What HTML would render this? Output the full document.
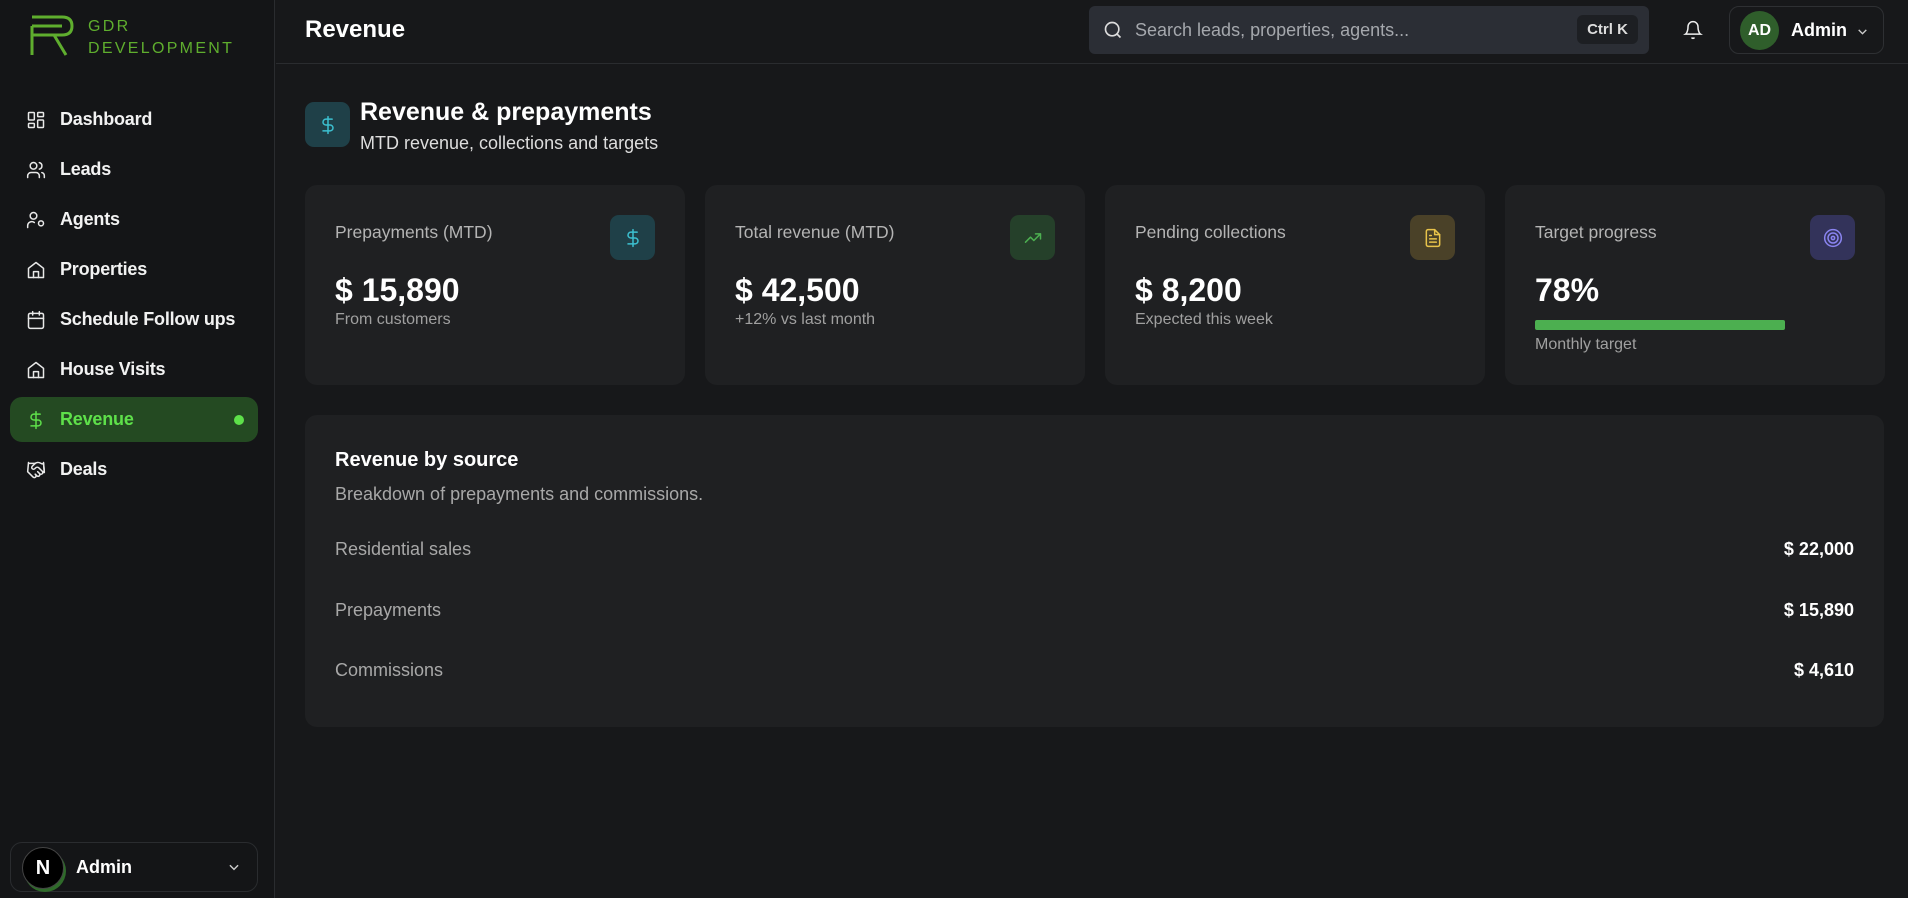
<!DOCTYPE html>
<html><head><meta charset="utf-8"><style>
*{box-sizing:border-box;margin:0;padding:0}
body{width:1908px;height:898px;background:#17181a;font-family:"Liberation Sans",sans-serif;color:#fff;position:relative;overflow:hidden}
.side{position:absolute;left:0;top:0;width:275px;height:898px;background:#141517;border-right:1px solid #2a2c2f}
.nav{position:absolute;left:10px;width:248px;height:45px;border-radius:12px;display:flex;align-items:center;font-size:18px;font-weight:bold;color:#f2f2f2;letter-spacing:-0.2px}
.nav svg{position:absolute;left:16px;width:20px;height:20px;fill:none;stroke:#e8e8e8;stroke-width:1.8;stroke-linecap:round;stroke-linejoin:round}
.nav span{position:absolute;left:50px}
.hdr{position:absolute;left:276px;top:0;right:0;height:64px;border-bottom:1px solid #2a2c2f}
.card{position:absolute;top:185px;width:380px;height:200px;background:#1f2022;border-radius:12px}
.ib{position:absolute;top:30px;right:30px;width:45px;height:45px;border-radius:9px;display:flex;align-items:center;justify-content:center}
.ib svg{width:20px;height:20px;fill:none;stroke-width:1.8;stroke-linecap:round;stroke-linejoin:round}
.val{position:absolute;left:30px;top:87px;font-size:32px;font-weight:bold}
.sub{position:absolute;left:30px;top:126px;font-size:16px;color:#a0a0a0}
.t{position:absolute;left:30px;top:37px;font-size:17.5px;color:#b4b4b4}
.row{position:absolute;left:30px;right:30px;display:flex;justify-content:space-between;font-size:18px}
.row span:first-child{color:#a8a8a8}
.row span:last-child{font-weight:bold}
</style></head><body>
<div class="side">
  <svg style="position:absolute;left:30px;top:15px" width="48" height="42" viewBox="0 0 48 42" fill="none" stroke="#5fae2e" stroke-width="3">
    <path d="M2 2H32Q42 2 42 11Q42 20 32 20H2"/><path d="M2 11V40"/><path d="M2 11H32"/><path d="M24 20L36 40"/>
  </svg>
  <div style="position:absolute;left:88px;top:16px;font-size:16px;color:#5fae2e;letter-spacing:2.3px;line-height:22px">GDR<br>DEVELOPMENT</div>

  <div class="nav" style="top:97px"><svg viewBox="0 0 24 24"><rect x="3" y="3" width="7" height="9" rx="1"/><rect x="14" y="3" width="7" height="5" rx="1"/><rect x="14" y="12" width="7" height="9" rx="1"/><rect x="3" y="16" width="7" height="5" rx="1"/></svg><span>Dashboard</span></div>
  <div class="nav" style="top:147px"><svg viewBox="0 0 24 24"><circle cx="9" cy="7" r="4"/><path d="M2 21v-2a4 4 0 0 1 4-4h6a4 4 0 0 1 4 4v2"/><path d="M16 3.1a4 4 0 0 1 0 7.8M22 21v-2a4 4 0 0 0-3-3.9"/></svg><span>Leads</span></div>
  <div class="nav" style="top:197px"><svg viewBox="0 0 24 24"><circle cx="9" cy="7" r="4"/><path d="M2 21v-2a5 5 0 0 1 8-4"/><circle cx="18" cy="16" r="3"/></svg><span>Agents</span></div>
  <div class="nav" style="top:247px"><svg viewBox="0 0 24 24"><path d="M3 10l9-7 9 7v11H3z"/><path d="M9 21v-7h6v7"/></svg><span>Properties</span></div>
  <div class="nav" style="top:297px"><svg viewBox="0 0 24 24"><rect x="3" y="4" width="18" height="18" rx="2"/><path d="M16 2v4M8 2v4M3 10h18"/></svg><span>Schedule Follow ups</span></div>
  <div class="nav" style="top:347px"><svg viewBox="0 0 24 24"><path d="M3 10l9-7 9 7v11H3z"/><path d="M9 21v-7h6v7"/></svg><span>House Visits</span></div>
  <div class="nav" style="top:397px;background:#244a22;color:#5ee04a"><svg viewBox="0 0 24 24" style="stroke:#5ee04a"><path d="M12 2v20M17 5H9.5a3.5 3.5 0 0 0 0 7h5a3.5 3.5 0 0 1 0 7H6"/></svg><span>Revenue</span><div style="position:absolute;left:224px;width:10px;height:10px;border-radius:50%;background:#5ee04a"></div></div>
  <div class="nav" style="top:447px"><svg viewBox="0 0 24 24"><path d="M11 17l2 2a1 1 0 1 0 3-3"/><path d="M14 14l2.5 2.5a1 1 0 1 0 3-3l-3.9-3.9a3 3 0 0 0-4.2 0l-.9.9a1 1 0 1 1-3-3l2.8-2.8a5.8 5.8 0 0 1 7.1-.9l.5.3a4 4 0 0 0 2.8.5L21 4l1 11h-2"/><path d="M21 3l1 11h-2M3 3L2 14l6.5 6.5a1 1 0 1 0 3-3M3 4h8"/></svg><span>Deals</span></div>

  <div style="position:absolute;left:10px;top:842px;width:248px;height:50px;border:1px solid #2a2c2f;border-radius:12px">
    <div style="position:absolute;left:11px;top:4px;width:42px;height:42px;border-radius:50%;background:#000;border:1px solid #444;box-shadow:2px 3px 0 #2f6b2a;display:flex;align-items:center;justify-content:center;font-size:20px;font-weight:bold">N</div>
    <div style="position:absolute;left:65px;top:14px;font-size:18px;font-weight:bold">Admin</div>
    <svg style="position:absolute;right:16px;top:17px" width="14" height="14" viewBox="0 0 24 24" fill="none" stroke="#ccc" stroke-width="2.5"><path d="M5 9l7 7 7-7"/></svg>
  </div>
</div>

<div class="hdr">
  <div style="position:absolute;left:29px;top:16px;font-size:24px;font-weight:bold">Revenue</div>
  <div style="position:absolute;left:813px;top:6px;width:560px;height:48px;background:#2b2e35;border-radius:6px">
    <svg style="position:absolute;left:14px;top:14px" width="20" height="20" viewBox="0 0 24 24" fill="none" stroke="#ddd" stroke-width="2"><circle cx="11" cy="11" r="8"/><path d="M21 21l-4.3-4.3"/></svg>
    <div style="position:absolute;left:46px;top:14px;font-size:18px;color:#a5a8ad">Search leads, properties, agents...</div>
    <div style="position:absolute;left:488px;top:9px;width:61px;height:29px;background:#1d1f23;border-radius:6px;font-size:15px;font-weight:bold;color:#ddd;text-align:center;line-height:29px">Ctrl K</div>
  </div>
  <svg style="position:absolute;left:1407px;top:19px" width="20" height="22" viewBox="0 0 24 24" fill="none" stroke="#eee" stroke-width="1.8"><path d="M6 8a6 6 0 0 1 12 0c0 7 3 9 3 9H3s3-2 3-9"/><path d="M10.3 21a1.9 1.9 0 0 0 3.4 0"/></svg>
  <div style="position:absolute;left:1453px;top:6px;width:155px;height:48px;border:1px solid #2e3033;border-radius:10px">
    <div style="position:absolute;left:10px;top:4px;width:39px;height:39px;border-radius:50%;background:#2f5e2b;font-size:16px;font-weight:bold;text-align:center;line-height:39px">AD</div>
    <div style="position:absolute;left:61px;top:13px;font-size:18px;font-weight:bold">Admin</div>
    <svg style="position:absolute;left:126px;top:18px" width="13" height="13" viewBox="0 0 24 24" fill="none" stroke="#ccc" stroke-width="2.5"><path d="M5 9l7 7 7-7"/></svg>
  </div>
</div>

<div style="position:absolute;left:305px;top:102px;width:45px;height:45px;border-radius:9px;background:#1f4048;display:flex;align-items:center;justify-content:center"><svg width="20" height="20" viewBox="0 0 24 24" fill="none" stroke="#3cc0d0" stroke-width="1.8" stroke-linecap="round"><path d="M12 2v20M17 5H9.5a3.5 3.5 0 0 0 0 7h5a3.5 3.5 0 0 1 0 7H6"/></svg></div>
<div style="position:absolute;left:360px;top:98px;font-size:25px;font-weight:bold">Revenue &amp; prepayments</div>
<div style="position:absolute;left:360px;top:133px;font-size:18px;color:#ddd">MTD revenue, collections and targets</div>

<div class="card" style="left:305px"><div class="t">Prepayments (MTD)</div><div class="ib" style="background:#1f4048"><svg viewBox="0 0 24 24" stroke="#3cc0d0"><path d="M12 2v20M17 5H9.5a3.5 3.5 0 0 0 0 7h5a3.5 3.5 0 0 1 0 7H6"/></svg></div><div class="val">$ 15,890</div><div class="sub">From customers</div></div>
<div class="card" style="left:705px"><div class="t">Total revenue (MTD)</div><div class="ib" style="background:#25402a"><svg viewBox="0 0 24 24" stroke="#4caf50"><path d="M3 17l6-6 4 4 8-8M15 7h6v6"/></svg></div><div class="val">$ 42,500</div><div class="sub">+12% vs last month</div></div>
<div class="card" style="left:1105px"><div class="t">Pending collections</div><div class="ib" style="background:#4a4128"><svg viewBox="0 0 24 24" stroke="#e8c34a"><path d="M14 2H6a2 2 0 0 0-2 2v16a2 2 0 0 0 2 2h12a2 2 0 0 0 2-2V8z"/><path d="M14 2v6h6M8 13h8M8 17h8M8 9h2"/></svg></div><div class="val">$ 8,200</div><div class="sub">Expected this week</div></div>
<div class="card" style="left:1505px"><div class="t">Target progress</div><div class="ib" style="background:#33335a"><svg viewBox="0 0 24 24" stroke="#8a84f0"><circle cx="12" cy="12" r="10"/><circle cx="12" cy="12" r="6"/><circle cx="12" cy="12" r="2"/></svg></div><div class="val">78%</div><div style="position:absolute;left:30px;top:135px;width:250px;height:10px;border-radius:2px;background:#4caf50"></div><div class="sub" style="top:151px">Monthly target</div></div>

<div style="position:absolute;left:305px;top:415px;width:1579px;height:312px;background:#1f2022;border-radius:12px">
  <div style="position:absolute;left:30px;top:34px;font-size:20px;font-weight:bold">Revenue by source</div>
  <div style="position:absolute;left:30px;top:69px;font-size:18px;color:#a8a8a8">Breakdown of prepayments and commissions.</div>
  <div class="row" style="top:124px"><span>Residential sales</span><span>$ 22,000</span></div>
  <div class="row" style="top:185px"><span>Prepayments</span><span>$ 15,890</span></div>
  <div class="row" style="top:245px"><span>Commissions</span><span>$ 4,610</span></div>
</div>
</body></html>
